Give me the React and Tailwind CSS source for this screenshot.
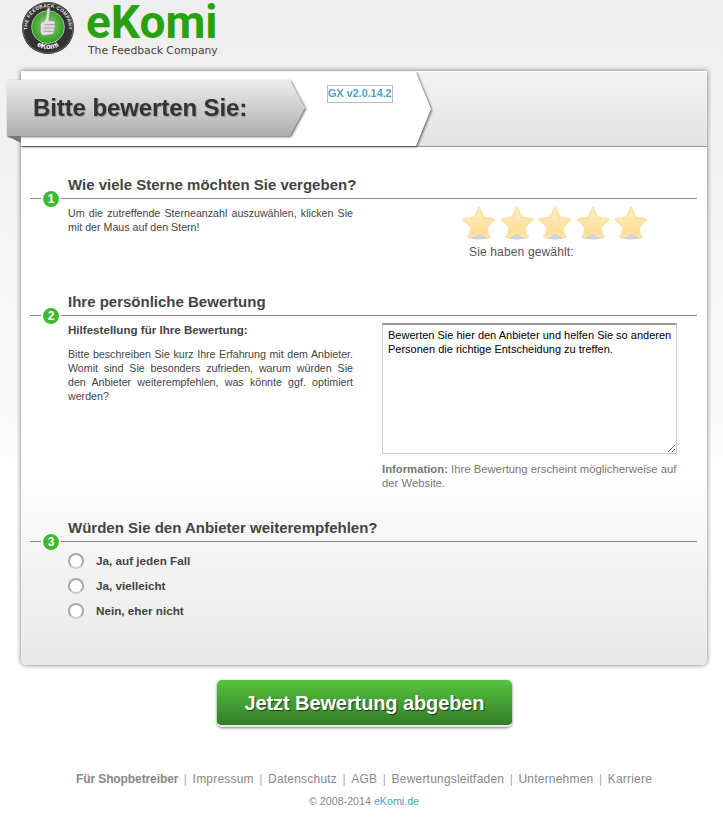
import React from "react";

const FONT = "font-['Liberation_Sans',Arial,sans-serif]";

function Logo() {
  return (
    <svg width="54" height="54" viewBox="0 0 56 56" className="shrink-0">
      <defs>
        <path id="seal-top" d="M8.5 37 A21.5 21.5 0 1 1 47.5 37" />
        <path id="seal-bottom" d="M8 37 A22 22 0 0 0 48 37" />
        <radialGradient id="seal-green" cx="50%" cy="45%" r="55%">
          <stop offset="0%" stopColor="#8ad874" />
          <stop offset="100%" stopColor="#2d9a1c" />
        </radialGradient>
      </defs>
      <circle cx="28" cy="28" r="27" fill="#333" />
      <circle cx="28" cy="28" r="26" fill="none" stroke="#666" strokeWidth="1" />
      <circle cx="28" cy="27" r="17" fill="url(#seal-green)" stroke="#ddd" strokeWidth="0.7" />
      <text fontSize="5" fontWeight="700" fill="#e8e8e8" fontFamily="Liberation Sans, sans-serif" letterSpacing="0.3">
        <textPath href="#seal-top" startOffset="50%" textAnchor="middle">THE FEEDBACK COMPANY</textPath>
      </text>
      <text fontSize="8" fontWeight="700" fill="#fff" fontFamily="Liberation Sans, sans-serif">
        <textPath href="#seal-bottom" startOffset="50%" textAnchor="middle">eKomi</textPath>
      </text>
      <path d="M27.5 7 C29.5 6.5 30.5 8 30 11 L29 20 L34 20.5 C36 21 36 24 35 25 C36 27 35.5 29 34.5 30 C35 32 34 34 33 34.5 L24 36 C21.5 36 20.5 34 20 32 L20 24 C20 22.5 22 21.5 24 20.5 C26 18.5 26.5 12 27.5 7 Z" fill="#dededa" stroke="#777" strokeWidth="0.6" />
      <path d="M24 24.5 H35 M23.5 28 H35 M23.5 31.5 H34" stroke="#888" strokeWidth="0.7" fill="none" />
    </svg>
  );
}

function Star() {
  return (
    <svg width="38" height="36" viewBox="0 0 38 36" className="block">
      <defs>
        <linearGradient id="star-fill" x1="0" y1="0" x2="0" y2="1">
          <stop offset="0%" stopColor="#fff2c8" />
          <stop offset="100%" stopColor="#fed88a" />
        </linearGradient>
      </defs>
      <ellipse cx="19" cy="31.5" rx="12" ry="3" fill="#d4d4d4" />
      <path
        d="M19 3 L23.6 12.8 L34.5 14.4 L26.6 22 L28.6 32.5 L19 27.4 L9.4 32.5 L11.4 22 L3.5 14.4 L14.4 12.8 Z"
        fill="url(#star-fill)"
        stroke="#fbe3a8"
        strokeWidth="2.4"
        strokeLinejoin="round"
      />
    </svg>
  );
}

function SectionHead({ num, title }) {
  return (
    <div className="relative ml-[9px] mr-[10px] h-[24px] border-b border-[#888]">
      <h2 className="pl-[38px] pt-px text-[15px] leading-[18px] font-bold text-[#444]">{title}</h2>
      <span className="absolute left-[11px] top-[14px] flex h-[20px] w-[20px] items-center justify-center rounded-full border-2 border-white bg-[#3dbb2d] text-[12px] font-bold text-white">
        {num}
      </span>
    </div>
  );
}

function Radio({ label }) {
  return (
    <label className="flex h-[25px] items-center gap-[12px] pl-[47px]">
      <input
        type="radio"
        name="recommend"
        className="h-[16px] w-[16px] appearance-none rounded-full border-2 border-[#aaa] border-b-[#ccc] bg-white"
      />
      <span className="text-[11.7px] font-bold text-[#444]">{label}</span>
    </label>
  );
}

const links = ["Impressum", "Datenschutz", "AGB", "Bewertungsleitfaden", "Unternehmen", "Karriere"];

export default function App() {
  return (
    <div className={`${FONT} min-h-[819px] bg-[linear-gradient(#eeeeee,#fcfcfc_457px,#ffffff_457px)]`}>
      <header className="flex h-[71px] items-start gap-[11px] pl-[21px] pt-px">
        <Logo />
        <div className="flex flex-col">
          <span className="font-['Roboto',sans-serif] text-[46px] leading-[42px] font-bold text-[#27a10d]">eKomi</span>
          <span className="pl-[2px] pt-px font-['DejaVu_Sans',sans-serif] text-[10.8px] leading-[13px] text-[#444]">The Feedback Company</span>
        </div>
      </header>

      <main className="ml-[21px] h-[594px] w-[686px] rounded-b-[5px] bg-gradient-to-b from-white from-[68%] to-[#e8e8e8] shadow-[0_0_5px_rgba(0,0,0,0.55)]">
        <div className="h-px" />
        <div className="relative h-[75px] border-b border-[#999] bg-gradient-to-b from-[#f3f3f3] to-[#e3e3e3]">
          <div className="h-[74px] w-[410px] drop-shadow-[1px_1px_1px_rgba(0,0,0,0.6)]">
            <div className="flex h-[74px] bg-white [clip-path:polygon(0_0,395px_0,410px_50%,395px_100%,0_100%)]">
              <span className="ml-[306px] mt-[13px] h-[18px] border border-[#bbb] text-[11px] leading-[15px] tracking-[-0.1px] font-bold text-[#4ba3c7]">
                GX v2.0.14.2
              </span>
            </div>
          </div>
          {/* ribbon hangs over the card's left edge */}
          <div className="absolute -left-[14px] top-[8px] drop-shadow-[1px_1px_1px_rgba(0,0,0,0.6)]">
            <div className="flex h-[56px] w-[298px] items-center bg-gradient-to-b from-[#eeeeee] to-[#b1aeae] pl-[26px] [clip-path:polygon(0_0,283px_0,298px_50%,283px_100%,0_100%)]">
              <h1 className="text-[24px] tracking-[-0.1px] font-bold text-[#333] [text-shadow:1px_1px_1px_rgba(0,0,0,0.25)]">Bitte bewerten Sie:</h1>
            </div>
          </div>
          <div className="absolute -left-[14px] top-[64px] h-[7px] w-[14px] bg-[#777] [clip-path:polygon(0_0,100%_0,100%_100%)]" />
        </div>

        <section className="mt-[28px] h-[117px]">
          <SectionHead num="1" title="Wie viele Sterne möchten Sie vergeben?" />
          <div className="flex justify-between pl-[47px] pr-[57px] pt-[7px]">
            <p className="w-[285px] text-justify text-[10.67px] leading-[14px] text-[#444]">
              Um die zutreffende Sterneanzahl auszuwählen, klicken Sie mit der Maus auf den Stern!
            </p>
            <div className="-mt-[1px]">
              <div className="flex">
                {[0, 1, 2, 3, 4].map((i) => (
                  <Star key={i} />
                ))}
              </div>
              <p className="pl-[9px] pt-[4px] text-[12px] tracking-[0.15px] leading-[14px] text-[#555]">Sie haben gewählt:</p>
            </div>
          </div>
        </section>

        <section className="h-[226px]">
          <SectionHead num="2" title="Ihre persönliche Bewertung" />
          <div className="flex pl-[47px] pt-[7px]">
            <div className="w-[285px] text-[10.67px] leading-[14px] text-[#444]">
              <h3 className="text-[11.6px] font-bold">Hilfestellung für Ihre Bewertung:</h3>
              <p className="pt-[10px] text-justify">
                Bitte beschreiben Sie kurz Ihre Erfahrung mit dem Anbieter. Womit sind Sie besonders zufrieden, warum würden Sie den Anbieter weiterempfehlen, was könnte ggf. optimiert werden?
              </p>
            </div>
            <div className="ml-[29px] w-[297px]">
              <textarea
                defaultValue="Bewerten Sie hier den Anbieter und helfen Sie so anderen Personen die richtige Entscheidung zu treffen."
                className="block h-[131px] w-[295px] border border-t-2 border-[#ccc] border-t-[#999] bg-white pl-[5px] pr-px pt-[3px] text-[11px] leading-[14px] text-black outline-none"
              />
              <p className="pt-[8px] text-[11.3px] leading-[14px] text-[#777]">
                <b>Information:</b> Ihre Bewertung erscheint möglicherweise auf der Website.
              </p>
            </div>
          </div>
        </section>

        <section>
          <SectionHead num="3" title="Würden Sie den Anbieter weiterempfehlen?" />
          <div className="pt-[6px]">
            <Radio label="Ja, auf jeden Fall" />
            <Radio label="Ja, vielleicht" />
            <Radio label="Nein, eher nicht" />
          </div>
        </section>
      </main>

      <div className="pl-[217px] pt-[15px]">
        <button className="h-[47px] w-[295px] rounded-[5px] border-b-2 border-[#e8f0e6] bg-gradient-to-b from-[#56c640] to-[#347b27] text-[20px] tracking-[-0.1px] font-bold text-white shadow-[0_1px_3px_rgba(0,0,0,0.5)] [text-shadow:1px_1px_1px_rgba(0,0,0,0.6)]">
          Jetzt Bewertung abgeben
        </button>
      </div>

      <footer className="pl-[5px] pt-[44px] text-center">
        <nav className="flex justify-center text-[12px] leading-[16px] tracking-[0.2px] text-[#888]">
          <a className="font-bold tracking-[-0.1px]">Für Shopbetreiber</a>
          {links.map((l) => (
            <React.Fragment key={l}>
              <span className="px-[5.5px] text-[#aaa]">|</span>
              <a>{l}</a>
            </React.Fragment>
          ))}
        </nav>
        <p className="pt-[7px] text-[10.7px] leading-[14px] text-[#888]">
          © 2008-2014 <a className="text-[#4a9fc4]">eKomi.de</a>
        </p>
      </footer>
    </div>
  );
}
